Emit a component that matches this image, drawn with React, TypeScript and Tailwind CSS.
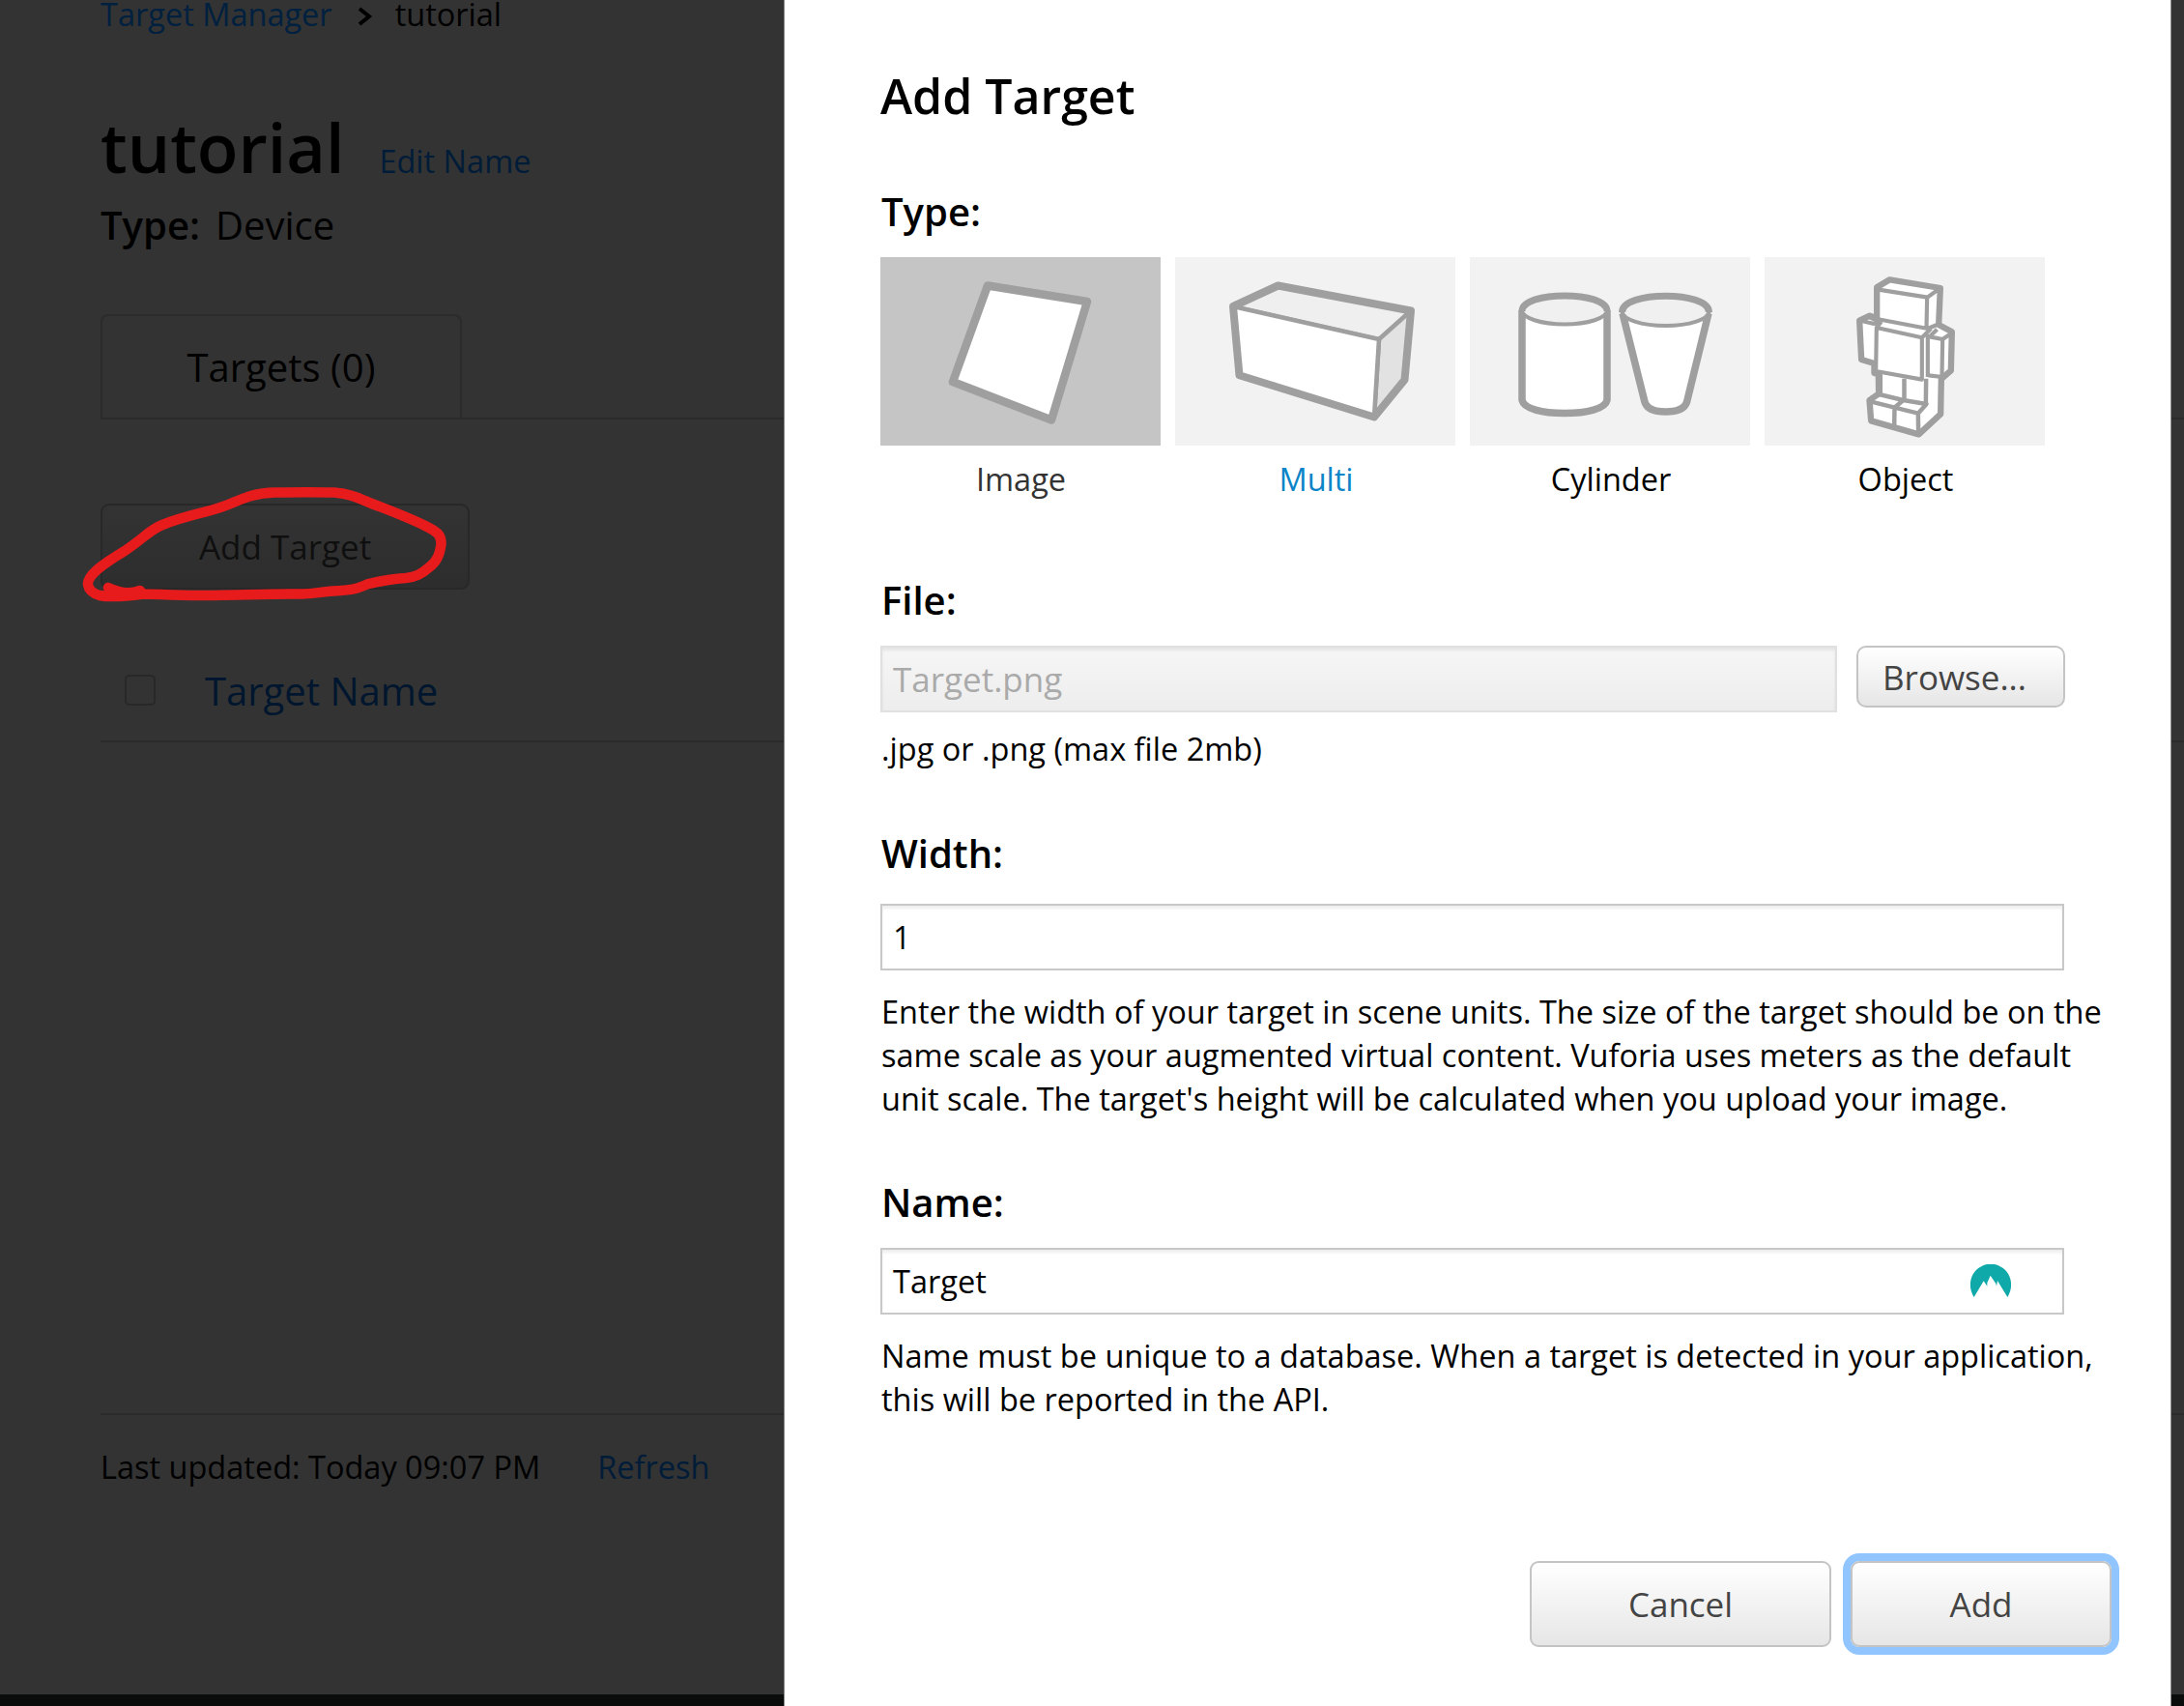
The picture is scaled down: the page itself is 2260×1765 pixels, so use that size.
import type { ReactNode } from "react";

function ImageIcon() {
  return (
    <svg viewBox="0 0 290 195" className="h-[195px] w-[290px]" fill="#fff" stroke="#9f9f9f" strokeWidth="8.5" strokeLinejoin="round">
      <path d="M111 29.5 214 46 177 168.5 75 129Z" />
    </svg>
  );
}

function MultiIcon() {
  return (
    <svg viewBox="0 0 290 195" className="h-[195px] w-[290px]" stroke="#9f9f9f" strokeLinejoin="round">
      <path d="M60 51 106.500 29.500 244 55.500 211 85Z" fill="#efefef" strokeWidth="4" />
      <path d="M211 85 244 55.500 237.500 127 206 165.500Z" fill="#e2e2e2" strokeWidth="4.500" />
      <path d="M60 51 211 85 206 165.500 66.500 122.300Z" fill="#fff" strokeWidth="4.500" />
      <path d="M60 51 106.500 29.500 244 55.500 237.500 127 206 165.500 66.500 122.300Z" fill="none" strokeWidth="8" />
    </svg>
  );
}

function CylinderIcon() {
  return (
    <svg viewBox="0 0 290 195" className="h-[195px] w-[290px]" stroke="#9f9f9f" strokeLinejoin="round">
      <path d="M54 55V148C56 157 75 161.500 98 161.500S140 157 142 148V55" fill="#fff" strokeWidth="7.500" />
      <ellipse cx="98" cy="55" rx="44" ry="14.500" fill="#f0f0f0" strokeWidth="4" />
      <path d="M54 56C54 34.500 142 34.500 142 56" fill="none" strokeWidth="7" />
      <path d="M158 58 181 150C183.500 157.500 192 160 202.500 160S222 157.500 224.500 150L247 58" fill="#fff" strokeWidth="7.500" />
      <ellipse cx="202.500" cy="56" rx="45" ry="15" fill="#f0f0f0" strokeWidth="4" />
      <path d="M157.500 57C157.500 34.500 247.500 34.500 247.500 57" fill="none" strokeWidth="7" />
    </svg>
  );
}

function ObjectIcon() {
  return (
    <svg viewBox="-250.500 -42 870 585" className="h-[195px] w-[290px]" fill="none" stroke="#9f9f9f" strokeLinejoin="round">
      <path
        d="M98 52 138 28 295 54 290 168 331 190 328 310 298 336 296 445 228 508 80 466 75 402 104 382 103 322 90 318 90 288 50 276 44 155 76 140 98 148Z"
        fill="#fff"
        strokeWidth="19"
      />
      <g strokeWidth="12.500">
        <path d="M98 58 255 83 295 54M254 83 252 178M98 150 256 180 292 165" />
        <path d="M48 155 92 166M76 145 100 156 92 170" />
        <path d="M95 312 97 177 238 208V338ZM97 177 112 158M238 208 266 180M256 198V330" />
        <path d="M262 205 302 213 330 194M302 213 300 330M258 325 302 330M262 205 285 182" />
      </g>
      <g strokeWidth="13.500">
        <path d="M109 322V385M183 335V405M251 335 250 415" />
        <path d="M78 406 153 425 180 402 105 384M153 425 152 485M153 425 226 443 252 414 180 402M226 443 227 505" />
      </g>
    </svg>
  );
}

function MountainBadge() {
  return (
    <svg viewBox="0 0 126 102" className="mb-[2px] ml-auto h-[34px] w-[42px]" fill="#0fa9aa">
      <path d="M11 102C-6 74-4 42 17 19A63 63 0 0 1 109 19C130 42 132 74 115 102L84 51 81 68 79 60 62 35 52 58V68L41 52Z" />
    </svg>
  );
}

function TypeTile({ label, labelClass, tileClass, children }: { label: string; labelClass: string; tileClass: string; children: ReactNode }) {
  return (
    <div className="flex w-[290px] flex-col items-center">
      <div className={tileClass}>{children}</div>
      <div className={labelClass}>{label}</div>
    </div>
  );
}

function FieldLabel({ children }: { children: ReactNode }) {
  return <div className="pl-px text-[40px] leading-[54px] font-semibold">{children}</div>;
}

function DatabasePage() {
  return (
    <div className="flex h-full flex-col pl-[104px]">
      <div className="flex h-[30px] items-center text-[32.5px] leading-[30px]">
        <span className="text-[#00203f]">Target Manager</span>
        <svg viewBox="0 0 16 20" className="mt-[4px] mr-[23px] ml-[26px] h-5 w-4" fill="none" stroke="#000" strokeWidth="4">
          <path d="M2 2 12 10 2 18" />
        </svg>
        <span>tutorial</span>
      </div>

      <div className="mt-[77px] flex h-[90px] items-baseline leading-[90px]">
        <span className="text-[70px] font-semibold">tutorial</span>
        <span className="ml-9 text-[32.5px] text-[#001c38]">Edit Name</span>
      </div>

      <div className="mt-[9px] flex text-[40px] leading-[54px]">
        <span className="font-semibold">Type:</span>
        <span className="ml-4">Device</span>
      </div>

      <div className="mt-[65px] flex border-b-2 border-[#2b2b2b]">
        <div className="flex h-[107px] w-[374px] items-center justify-center rounded-t-lg border-2 border-b-0 border-[#2b2b2b] text-[40px]">
          Targets (0)
        </div>
      </div>

      <div className="mt-[87px] flex h-[89px] w-[382px] items-center justify-center rounded-[9px] border-2 border-[#282828] bg-linear-to-b from-[#333] to-[#2d2d2d] pt-[2px] text-[35px] text-[#0f0f0f]">
        Add Target
      </div>

      <div className="mt-[52px] flex h-[106px] items-center border-b-2 border-[#2b2b2b] pl-[25px]">
        <div className="h-8 w-8 rounded-[5px] border-2 border-[#282828]" />
        <span className="mt-[2px] ml-[51px] text-[40px] text-[#00162e]">Target Name</span>
      </div>

      <div className="mt-[694px] flex border-t-2 border-[#2b2b2b] pt-[31px] text-[32.5px] leading-[46px]">
        <span>Last updated: Today 09:07 PM</span>
        <span className="ml-[59px] text-[#001c38]">Refresh</span>
      </div>

      <div className="mt-auto -ml-[104px] h-3 bg-[#0a0c0c]" />
    </div>
  );
}

function Scribble() {
  return (
    <svg viewBox="80 495 390 135" className="absolute top-[495px] left-[80px] h-[135px] w-[390px]" fill="none" stroke="#e81b1c" strokeWidth="10.5" strokeLinecap="round" strokeLinejoin="round">
      <path d="M112 608C122 612 132 616 145 611M112 608C125 614 134 617 148 614M91 605C90 596 104 585 129 570C150 556 155 548 168 543C190 534 210 531 228 525C246 519 258 510 284 509.500C310 509 330 509 346 509.500C366 511 376 518 390 523C416 533 424 536 440 544C452 550 457 553 456.500 563C455 574 452 581 444 587C436 594 430 597 420 598C404 599 390 602 381 604C370 609 366 610 352 611C330 612 325 615 310 614.500C280 614 240 616 205 616C180 616 160 614.500 148 614.500C130 617 113 618 103 616C96 614 92 611 91 605Z" />
    </svg>
  );
}

function AddTargetPanel() {
  return (
    <div className="absolute inset-y-0 left-[811px] w-[1436px] border-x border-[#8a8a8a] bg-white pl-[99px] text-black">
      <h1 className="mt-[65px] text-[50px] leading-[68px] font-semibold">Add Target</h1>

      <div className="mt-[59px]">
        <FieldLabel>Type:</FieldLabel>
      </div>
      <div className="mt-5 flex gap-[15px]">
        <TypeTile label="Image" tileClass="bg-[#c5c5c5]" labelClass="mt-3 pl-px text-[32.5px] leading-[46px] text-[#333]">
          <ImageIcon />
        </TypeTile>
        <TypeTile label="Multi" tileClass="bg-[#f2f2f2]" labelClass="mt-3 pl-[2px] text-[32.5px] leading-[46px] text-[#0b84c8]">
          <MultiIcon />
        </TypeTile>
        <TypeTile label="Cylinder" tileClass="bg-[#f2f2f2]" labelClass="mt-3 pl-[2px] text-[32.5px] leading-[46px]">
          <CylinderIcon />
        </TypeTile>
        <TypeTile label="Object" tileClass="bg-[#f2f2f2]" labelClass="mt-3 pl-[2px] text-[32.5px] leading-[46px]">
          <ObjectIcon />
        </TypeTile>
      </div>

      <div className="mt-[75px]">
        <FieldLabel>File:</FieldLabel>
      </div>
      <div className="mt-5 flex items-start">
        <div className="flex h-[69px] w-[990px] items-center border-2 border-[#e0e0e0] bg-linear-to-b from-[#f6f6f6] to-[#ededed] pt-[2px] pl-[11px] text-[35px] text-[#aaa] shadow-[inset_0_3px_3px_rgba(0,0,0,0.07)]">
          Target.png
        </div>
        <button className="ml-5 flex h-16 w-[216px] items-center rounded-[10px] border-2 border-[#c4c4c4] bg-linear-to-b from-white to-[#e6e6e6] pt-[2px] pl-[25px] text-[35px] text-[#444]">
          Browse...
        </button>
      </div>
      <p className="mt-[15px] pl-px text-[32.5px] leading-[45px]">.jpg or .png (max file 2mb)</p>

      <div className="mt-[59px]">
        <FieldLabel>Width:</FieldLabel>
      </div>
      <div className="mt-[25px] flex h-[69px] w-[1225px] items-center border-2 border-[#c8c8c8] pt-[2px] pl-[11px] text-[32.5px] shadow-[inset_0_3px_3px_rgba(0,0,0,0.07)]">
        1
      </div>
      <p className="mt-5 pl-px text-[32.5px] leading-[45px] whitespace-nowrap">
        Enter the width of your target in scene units. The size of the target should be on the
        <br />
        same scale as your augmented virtual content. Vuforia uses meters as the default
        <br />
        unit scale. The target's height will be calculated when you upload your image.
      </p>

      <div className="mt-[58px]">
        <FieldLabel>Name:</FieldLabel>
      </div>
      <div className="mt-5 flex h-[69px] w-[1225px] items-center border-2 border-[#c8c8c8] pr-[53px] pl-[11px] text-[32.5px] shadow-[inset_0_3px_3px_rgba(0,0,0,0.07)]">
        <span className="mt-[2px]">Target</span>
        <MountainBadge />
      </div>
      <p className="mt-5 pl-px text-[32.5px] leading-[45px] whitespace-nowrap">
        Name must be unique to a database. When a target is detected in your application,
        <br />
        this will be reported in the API.
      </p>

      <div className="mt-[145px] mr-[61px] flex justify-end gap-5">
        <button className="h-[89px] w-[312px] rounded-[9px] border-2 border-[#c4c4c4] bg-linear-to-b from-white to-[#e6e6e6] pt-px text-[35px] text-[#444]">
          Cancel
        </button>
        <button className="h-[89px] w-[270px] rounded-[9px] border-2 border-[#c4c4c4] bg-linear-to-b from-white to-[#e6e6e6] pt-px text-[35px] text-[#444] shadow-[0_0_0_8px_#91c5ff]">
          Add
        </button>
      </div>
    </div>
  );
}

export default function App() {
  return (
    <div className="relative h-[1765px] w-[2260px] overflow-hidden bg-[#333] font-['Open_Sans',sans-serif] text-black">
      <DatabasePage />
      <AddTargetPanel />
      <Scribble />
    </div>
  );
}
